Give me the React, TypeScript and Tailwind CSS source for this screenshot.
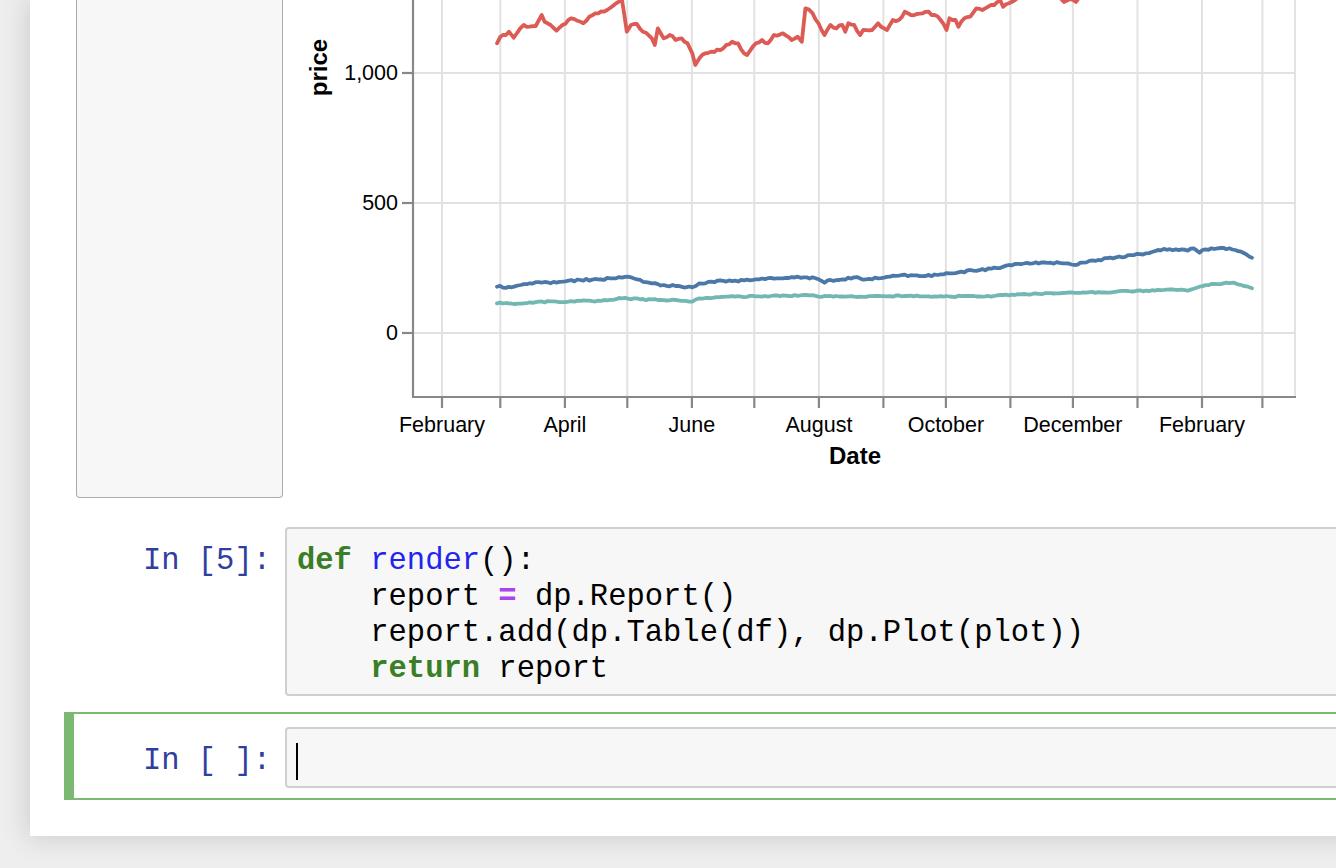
import React from "react";

type Pt = [number, number];

// key points traced from the chart, in page pixels
const GOOG: Pt[] = [
  [497, 43.3], [500, 37.3], [505.9, 35], [508.9, 31.7], [513.7, 37.7], [523.8, 25], [529.7, 26.7],
  [535.7, 26], [541.7, 15], [544.6, 21.7], [550.6, 25], [556.5, 30.7], [571.4, 18.3], [580.4, 21.7],
  [583.3, 23.3], [589.3, 16.7], [598.2, 13.3], [607.1, 10], [616.1, 3.3], [622, 0], [626.8, 31.7],
  [631, 25], [636.9, 24], [642.9, 31.7], [651.8, 38.3], [654.8, 45], [657.8, 28.3], [663.7, 38.3],
  [669.7, 35], [675.6, 40], [681.6, 38.3], [687.5, 43.3], [692.3, 53.3], [695.3, 65], [699.4, 58.3],
  [705.4, 53.3], [711.3, 51.7], [723.3, 48.3], [732.2, 41.7], [738.1, 43.3], [744.1, 53.3],
  [747.1, 55], [756, 43.3], [762, 40], [767.9, 43.3], [773.9, 35], [782.8, 33.3], [791.7, 40],
  [797.7, 36.7], [801.8, 41.7], [805.4, 8.3], [812.6, 13.3], [818.5, 23.3], [824.5, 35],
  [830.4, 25], [836.4, 28.3], [842.3, 25], [845.3, 31.7], [848.3, 23.3], [854.2, 25], [860.2, 35],
  [863.2, 30], [872.1, 30], [878.1, 23.3], [884, 28.3], [887, 30], [892.9, 20], [898.9, 20],
  [904.8, 11.7], [910.8, 15], [916.8, 14], [922.7, 13.3], [928.7, 11.7], [931.6, 15], [934.6, 15],
  [940.6, 20], [946.5, 30], [949.5, 18.3], [955.5, 20], [958.4, 26.7], [964.4, 18.3], [970.3, 16.7],
  [976.3, 8.3], [982.3, 10], [988.2, 6.7], [994.2, 5], [1000.1, 0], [1003.1, 6.7], [1009, 3.3],
  [1015, 0], [1025, -8], [1040, -12], [1055, -6], [1064, 2], [1070, -1], [1076, 2], [1085, -14],
  [1110, -30], [1150, -45], [1200, -60], [1252, -40],
];

const AAPL: Pt[] = [
  [497, 286.7], [511.9, 287.3], [520.8, 285], [529.7, 283.3], [541.7, 282.7], [550.6, 283.3],
  [562.5, 281.7], [580.4, 280], [598.2, 279.3], [616.1, 278.3], [628, 276.7], [637, 279.3],
  [651.8, 283.3], [663.7, 285], [675.6, 286], [692.3, 287.3], [699.4, 283.3], [711.3, 281.7],
  [735.2, 280.7], [759, 279.3], [782.8, 278.3], [806.6, 277.3], [815.5, 278.3], [824.5, 282.7],
  [830.4, 280], [842.3, 279.3], [854.2, 277.3], [866.1, 279.3], [878.1, 278.3], [890, 276.7],
  [901.9, 275], [913.8, 275.3], [925.7, 276], [937.6, 275], [949.5, 273.3], [961.4, 271.7],
  [973.3, 270.7], [991.2, 268.7], [1003.1, 266.7], [1009, 265], [1032.9, 263.3], [1050.7, 262.7],
  [1062.6, 263.3], [1074.5, 265], [1080.5, 262.7], [1098.3, 260], [1116.2, 257.3], [1134.1, 255],
  [1146, 253.3], [1157.9, 250], [1175.8, 249.3], [1187.7, 250.7], [1193.6, 248.3], [1199.6, 252.7],
  [1205.5, 249.3], [1217.4, 248.3], [1229.3, 248.3], [1235.3, 250], [1241.2, 251.7],
  [1247.2, 255], [1252, 257.7],
];

const MSFT: Pt[] = [
  [497, 303.3], [514.9, 304], [538.7, 301.7], [568.4, 301.7], [598.2, 300.7], [622, 298.3],
  [639.9, 299.3], [657.8, 300], [675.6, 300], [692.3, 301.7], [699.4, 298.3], [735.2, 296.7],
  [770.9, 296], [806.6, 295], [818.5, 296.7], [830.4, 296], [854.2, 296.7], [878.1, 296],
  [907.8, 296], [937.6, 296.7], [967.4, 296], [991.2, 296.7], [1003.1, 295], [1026.9, 294.3],
  [1056.7, 293.3], [1086.4, 292.7], [1116.2, 291.7], [1146, 290.7], [1175.8, 290], [1187.7, 290.7],
  [1199.6, 286.7], [1211.5, 284], [1223.4, 283.3], [1234.1, 282.7], [1241.2, 285], [1252, 288.3],
];

function rng(seed: number) {
  let s = seed;
  return () => {
    s = (s * 16807) % 2147483647;
    return s / 2147483647;
  };
}

function toPath(keys: Pt[], amp: number, seed: number) {
  const r = rng(seed);
  const out: string[] = [];
  for (let i = 0; i < keys.length - 1; i++) {
    const [x0, y0] = keys[i];
    const [x1, y1] = keys[i + 1];
    const n = Math.max(1, Math.round((x1 - x0) / 3));
    for (let j = 0; j < n; j++) {
      const t = j / n;
      const jitter = j === 0 ? 0 : (r() - 0.5) * amp;
      out.push(`${(x0 + (x1 - x0) * t).toFixed(1)},${(y0 + (y1 - y0) * t + jitter).toFixed(1)}`);
    }
  }
  const last = keys[keys.length - 1];
  out.push(`${last[0]},${last[1]}`);
  return "M" + out.join("L");
}

const monthTicks = [442, 500.3, 564.9, 627.3, 691.9, 754.3, 818.9, 883.4, 945.9, 1010.4, 1072.9, 1137.5, 1202, 1262.4];
const monthLabels: [number, string][] = [
  [442, "February"], [564.9, "April"], [691.9, "June"], [818.9, "August"],
  [945.9, "October"], [1072.9, "December"], [1202, "February"],
];
const yTicks: [number, string][] = [[73, "1,000"], [203, "500"], [333, "0"]];

const SANS = "'Liberation Sans', Arial, Helvetica, sans-serif";

function PriceChart() {
  return (
    <svg width={1060} height={498} className="block shrink-0">
      <g transform="translate(-283 0)">
        {/* grid */}
        {monthTicks.map((x) => (
          <line key={x} x1={x} x2={x} y1={-80} y2={397} stroke="#e2e2e2" strokeWidth={2} />
        ))}
        {[-57, 73, 203, 333].map((y) => (
          <line key={y} x1={413} x2={1295} y1={y} y2={y} stroke="#e2e2e2" strokeWidth={2} />
        ))}
        <line x1={1295} x2={1295} y1={-80} y2={397} stroke="#e2e2e2" strokeWidth={2} />

        {/* series */}
        <g fill="none" strokeWidth={3.8} strokeLinejoin="round" strokeLinecap="round">
          <path d={toPath(GOOG, 2.5, 11)} stroke="#dc5b55" />
          <path d={toPath(AAPL, 2, 29)} stroke="#4c78a8" />
          <path d={toPath(MSFT, 1.4, 57)} stroke="#72b7b2" />
        </g>

        {/* axes */}
        <line x1={413} x2={413} y1={-80} y2={398} stroke="#888" strokeWidth={2.2} />
        <line x1={412} x2={1296} y1={397} y2={397} stroke="#888" strokeWidth={2.2} />
        {yTicks.map(([y]) => (
          <line key={y} x1={402} x2={413} y1={y} y2={y} stroke="#888" strokeWidth={2.2} />
        ))}
        {monthTicks.map((x) => (
          <line key={x} x1={x} x2={x} y1={397} y2={408} stroke="#888" strokeWidth={2.2} />
        ))}

        {/* labels */}
        <g fontFamily={SANS} fontSize={21.5} fill="#000">
          {yTicks.map(([y, t]) => (
            <text key={t} x={398} y={y} textAnchor="end" dominantBaseline="central">
              {t}
            </text>
          ))}
          {monthLabels.map(([x, t]) => (
            <text key={x} x={x} y={432} textAnchor="middle">
              {t}
            </text>
          ))}
        </g>
        <text x={855} y={464} textAnchor="middle" fontFamily={SANS} fontSize={24} fontWeight={700}>
          Date
        </text>
        <text
          transform="translate(327 67.5) rotate(-90)"
          textAnchor="middle"
          fontFamily={SANS}
          fontSize={24}
          fontWeight={700}
        >
          price
        </text>
      </g>
    </svg>
  );
}

const mono = "font-['Liberation_Mono','DejaVu_Sans_Mono',monospace] text-[30.5px] leading-[36px]";

function Cell({ prompt, selected, children }: { prompt: string; selected?: boolean; children: React.ReactNode }) {
  return (
    <div
      className={
        "flex border-2 border-l-[10px] pt-[13px] pb-[10px] " +
        (selected ? "border-[#7bb972]" : "border-transparent")
      }
    >
      <div className={`${mono} w-[211px] shrink-0 pt-[16px] pr-[14px] text-right text-[#303f9f] whitespace-pre`}>
        {prompt}
      </div>
      <div className="flex-1 bg-[#f7f7f7] border-2 border-[#cfcfcf] rounded-[4px] pl-[10px] pt-[14px] pb-[7px]">
        {children}
      </div>
    </div>
  );
}

export default function App() {
  return (
    <div className="w-[1336px] h-[868px] overflow-hidden bg-[#eeeeee]">
      <div className="ml-[30px] w-[1360px] h-[836px] bg-white shadow-[0_0_24px_2px_rgba(87,87,87,0.22)]">
        <div className="flex h-[498px]">
          <div className="ml-[46px] w-[207px] h-full shrink-0 bg-[#f7f7f7] border-x border-b border-[#ababab] rounded-b-[4px]" />
          <PriceChart />
        </div>

        <div className="ml-[34px] mt-[14px]">
          <Cell prompt="In [5]:">
            <pre className={`${mono} text-black`}>
              <span className="font-bold text-[#3a7f25]">def</span>{" "}
              <span className="text-[#2323f0]">render</span>():{"\n"}
              {"    "}report <span className="font-bold text-[#a845ef]">=</span> dp.Report(){"\n"}
              {"    "}report.add(dp.Table(df), dp.Plot(plot)){"\n"}
              {"    "}<span className="font-bold text-[#3a7f25]">return</span> report
            </pre>
          </Cell>
          <div className="mt-[4px]">
            <Cell prompt="In [ ]:" selected>
              <div className={`${mono} h-[36px] flex items-center`}>
                <span className="block w-[2px] h-[37px] bg-black -ml-[1px]" />
              </div>
            </Cell>
          </div>
        </div>
      </div>
    </div>
  );
}
